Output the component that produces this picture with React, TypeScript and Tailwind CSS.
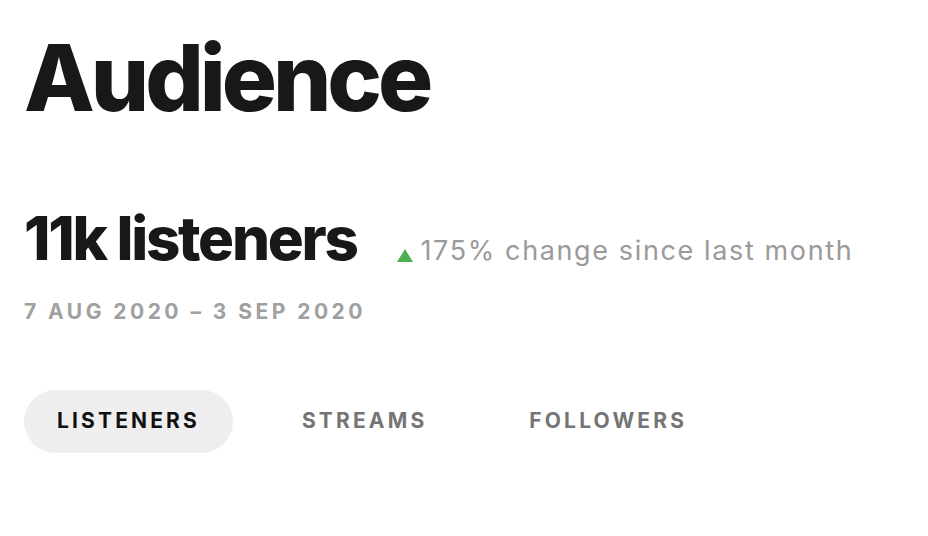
import React from "react";

export default function App() {
  const tabs = ["LISTENERS", "STREAMS", "FOLLOWERS"];
  return (
    <div className="w-[928px] h-[536px] bg-white font-['Inter',sans-serif] pl-6 pt-[24px]">
      <h1 className="text-[92px] leading-[108px] font-extrabold tracking-[-0.044em] text-[#181818]">
        Audience
      </h1>
      <div className="mt-[74px] flex items-baseline">
        <h2 className="text-[60px] leading-[64px] font-extrabold tracking-[-0.038em] text-[#181818]">
          11k listeners
        </h2>
        <div className="ml-[40px] flex items-baseline text-[27px] text-[#9a9a9a] tracking-[0.06em]">
          <svg width="16" height="13" viewBox="0 0 16 13" className="mr-[8px] self-center mt-[8px]">
            <polygon points="8,0 16,13 0,13" fill="#4caf50" />
          </svg>
          <span>175% change since last month</span>
        </div>
      </div>
      <div className="mt-[26px] text-[21px] leading-[28px] font-bold tracking-[0.165em] text-[#a0a0a0]">
        7 AUG 2020 – 3 SEP 2020
      </div>
      <div className="mt-[64px] flex gap-[36px]">
        {tabs.map((t, i) => (
          <div
            key={t}
            className={
              i === 0
                ? "h-[63px] px-[33px] rounded-full bg-[#eeeeee] flex items-center text-[21px] font-bold tracking-[0.15em] text-[#111111]"
                : "h-[63px] px-[33px] rounded-full flex items-center text-[21px] font-bold tracking-[0.15em] text-[#757575]"
            }
          >
            {t}
          </div>
        ))}
      </div>
    </div>
  );
}
